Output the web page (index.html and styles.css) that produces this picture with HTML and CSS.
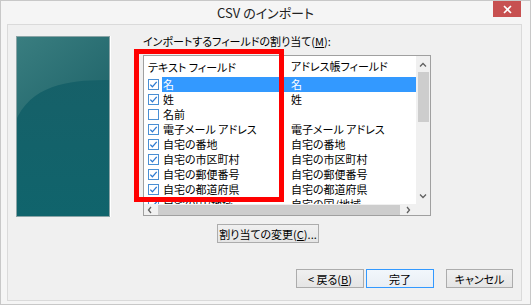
FILE: index.html
```html
<!DOCTYPE html>
<html lang="ja">
<head>
    <meta charset="UTF-8">
    <title>CSV のインポート</title>
    <link rel="stylesheet" href="styles.css">
</head>
<body>
    <div class="window">
        <div class="titlebar">
            <span></span>
            <span class="title">CSV のインポート</span>
            <span class="close">
                <svg width="9" height="9" viewBox="0 0 9 9"><path d="M1 1 L8 8 M8 1 L1 8" stroke="#fff" stroke-width="1.6"/></svg>
            </span>
        </div>

        <div class="client">
            <div class="main">
                <div class="wizard-art">
                    <svg width="94" height="181" viewBox="0 0 94 181">
                        <defs>
                            <linearGradient id="artBase" x1="0" y1="0" x2="0" y2="1">
                                <stop offset="0" stop-color="#185f67"/>
                                <stop offset="1" stop-color="#10646c"/>
                            </linearGradient>
                            <linearGradient id="artTop" x1="0" y1="0" x2="1" y2="1">
                                <stop offset="0" stop-color="#3a7e80"/>
                                <stop offset="1" stop-color="#1d6268"/>
                            </linearGradient>
                        </defs>
                        <rect width="94" height="181" fill="url(#artBase)"/>
                        <path d="M0 0 H94 V44 C60 44 20 46 2 80 L0 84 Z" fill="url(#artTop)"/>
                        <rect x="0.5" y="0.5" width="93" height="180" fill="none" stroke="#8aa4a6"/>
                    </svg>
                </div>

                <div class="assign">
                    <div class="assign-label">インポートするフィールドの割り当て(<u>M</u>):</div>
                    <div class="list-wrap">
                        <div class="listbox">
                            <div class="list-content">
                                <div class="list-row list-head">
                                    <div class="cell-left">テキスト フィールド</div>
                                    <div class="cell-right">アドレス帳フィールド</div>
                                </div>
                                <div id="rows"></div>
                            </div>
                            <div class="vscroll">
                                <svg class="arrow" width="8" height="5" viewBox="0 0 8 5"><path d="M1 4.5 L4 1.5 L7 4.5" fill="none" stroke="#606060" stroke-width="1.3"/></svg>
                                <div class="vthumb"></div>
                                <div class="vspace"></div>
                                <svg class="arrow" width="8" height="5" viewBox="0 0 8 5"><path d="M1 0.5 L4 3.5 L7 0.5" fill="none" stroke="#606060" stroke-width="1.3"/></svg>
                            </div>
                            <div class="hscroll">
                                <svg class="arrow" width="5" height="8" viewBox="0 0 5 8"><path d="M4 1 L1.5 4 L4 7" fill="none" stroke="#606060" stroke-width="1.3"/></svg>
                                <div class="hthumb"></div>
                                <svg class="arrow" width="5" height="8" viewBox="0 0 5 8"><path d="M1 1 L3.5 4 L1 7" fill="none" stroke="#606060" stroke-width="1.3"/></svg>
                            </div>
                            <div class="corner"></div>
                        </div>
                        <div class="highlight-box"></div>
                    </div>
                </div>
            </div>

            <div class="change-row">
                <button class="btn btn-change">割り当ての変更(<u>C</u>)...</button>
            </div>

            <div class="footer">
                <button class="btn">&lt; 戻る(<u>B</u>)</button>
                <button class="btn btn-default">完了</button>
                <button class="btn btn-cancel">キャンセル</button>
            </div>
        </div>
    </div>

    <script>
        const fields = [
            { text: '名', mapped: '名', checked: true, selected: true },
            { text: '姓', mapped: '姓', checked: true },
            { text: '名前', mapped: '', checked: false },
            { text: '電子メール アドレス', mapped: '電子メール アドレス', checked: true },
            { text: '自宅の番地', mapped: '自宅の番地', checked: true },
            { text: '自宅の市区町村', mapped: '自宅の市区町村', checked: true },
            { text: '自宅の郵便番号', mapped: '自宅の郵便番号', checked: true },
            { text: '自宅の都道府県', mapped: '自宅の都道府県', checked: true },
            { text: '自宅の国/地域', mapped: '自宅の国/地域', checked: true }
        ];

        const checkSvg = '<svg width="11" height="11" viewBox="0 0 11 11"><rect x="0.5" y="0.5" width="10" height="10" fill="#fff" stroke="#4a8fd4"/>' +
            '<path d="M2.3 5.6 L4.4 7.8 L8.7 2.8" fill="none" stroke="#2b78d0" stroke-width="1.3"/></svg>';
        const emptySvg = '<svg width="11" height="11" viewBox="0 0 11 11"><rect x="0.5" y="0.5" width="10" height="10" fill="#fff" stroke="#4a8fd4"/></svg>';

        const rows = document.getElementById('rows');
        fields.forEach(function(f) {
            const row = document.createElement('div');
            row.className = 'list-row' + (f.selected ? ' selected' : '');
            row.innerHTML =
                '<div class="cell-left"><span class="check">' + (f.checked ? checkSvg : emptySvg) + '</span>' +
                '<span class="field-name">' + f.text + '</span></div>' +
                '<div class="cell-right">' + f.mapped + '</div>';
            rows.appendChild(row);
        });
    </script>
</body>
</html>
```

FILE: styles.css
```css
* {
    box-sizing: border-box;
}

body {
    margin: 0;
    font-family: "Noto Sans CJK JP", "Noto Sans", sans-serif;
    font-feature-settings: "palt";
    font-size: 11px;
    color: #000;
    background: #ffffff;
}

.window {
    width: 531px;
    height: 305px;
    background: #f5f5f5;
    border: 1px solid #c8c8c8;
    display: flex;
    flex-direction: column;
}

.titlebar {
    height: 23px;
    display: grid;
    grid-template-columns: 1fr auto 1fr;
    align-items: start;
}

.title {
    font-size: 13px;
    line-height: 24px;
    color: #222;
}

.close {
    justify-self: end;
    margin-right: 9px;
    width: 28px;
    height: 16px;
    background: #c75050;
    display: flex;
    align-items: center;
    justify-content: center;
}

.client {
    margin: 0 8px 0 6px;
    height: 277px;
    background: #f0f0f0;
    border: 1px solid #dadada;
    padding: 9px 8px 0 8px;
}

.main {
    display: flex;
    gap: 33px;
}

.wizard-art {
    margin-top: 2px;
    width: 94px;
    height: 181px;
    box-shadow: 1px 0 0 #ffffff;
}

.wizard-art svg {
    display: block;
}

.assign-label {
    line-height: 14px;
    margin-bottom: 7px;
}

.list-wrap {
    position: relative;
}

.listbox {
    width: 288px;
    height: 161px;
    border: 1px solid #a0a0a0;
    background: #ffffff;
    display: grid;
    grid-template-columns: 272px 14px;
    grid-template-rows: 148px 11px;
}

.list-content {
    overflow: hidden;
}

.list-row {
    display: grid;
    grid-template-columns: 143px 1fr;
    height: 15px;
    line-height: 15px;
    white-space: nowrap;
}

.list-head {
    height: 21px;
    line-height: 20px;
}

.list-head .cell-left {
    padding-left: 4px;
}

.list-head .cell-right {
    padding-left: 5px;
}

.cell-left {
    display: flex;
    align-items: center;
}

.check {
    margin-left: 4px;
    width: 11px;
    height: 11px;
    display: flex;
}

.field-name {
    margin-left: 3px;
    padding-left: 1px;
    flex: 1;
    height: 15px;
}

.list-row .cell-right {
    padding-left: 4px;
}

.selected .field-name,
.selected .cell-right {
    background: #3399ff;
    color: #ffffff;
}

.vscroll {
    background: #f0f0f0;
    display: flex;
    flex-direction: column;
    align-items: center;
}

.vscroll .arrow {
    margin: 6px 0 5px;
}

.vthumb {
    width: 11px;
    height: 50px;
    background: #cdcdcd;
}

.vspace {
    flex: 1;
}

.hscroll {
    background: #f0f0f0;
    display: flex;
    align-items: center;
    padding: 0 5px 0 3px;
    gap: 6px;
}

.hthumb {
    flex: 1;
    height: 10px;
    background: #cdcdcd;
}

.corner {
    background: #f0f0f0;
}

.highlight-box {
    position: absolute;
    left: -9px;
    top: -6px;
    width: 150px;
    height: 153px;
    border: 5px solid #ff0000;
}

.btn {
    font-family: inherit;
    font-feature-settings: "palt";
    font-size: 11px;
    height: 19px;
    padding: 0;
    border: 1px solid #acacac;
    background: linear-gradient(#f0f0f0, #e5e5e5);
    color: #000;
}

.change-row {
    margin-top: 7px;
    padding-left: 201px;
}

.btn-change {
    width: 102px;
}

.footer {
    margin-top: 26px;
    display: flex;
    justify-content: flex-end;
    gap: 2px;
}

.footer .btn {
    width: 68px;
}

.btn-default {
    border-color: #3399ff;
    background: linear-gradient(#f2f7fc, #e9eef4);
}

.footer .btn-cancel {
    margin-left: 10px;
    width: 67px;
}
```
